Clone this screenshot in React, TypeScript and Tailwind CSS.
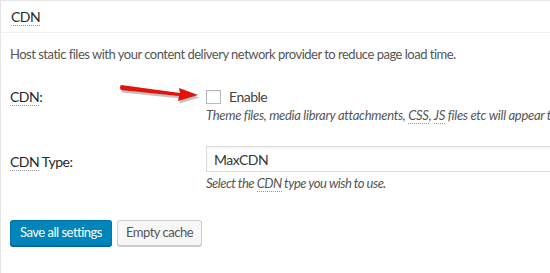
import React from "react";

const Abbr = ({ children }: { children: React.ReactNode }) => (
  <span className="border-b border-dotted border-[#999]">{children}</span>
);

const Arrow = () => (
  <svg width="84" height="22" viewBox="0 0 84 22" className="absolute left-[117px] top-[-5px]">
    <path d="M3 6 L62 13 L61 8 L80 15 L60 21 L61 16 L2 10 Z" fill="#777" opacity="0.45" transform="translate(1.5 1.5)" />
    <path d="M3 4 Q1 6.5 3 9 L61 15 L60 20 L80 14 L61 7 L62 12 Z" fill="#e3120b" />
  </svg>
);

export default function App() {
  return (
    <div
      className="w-[550px] h-[273px] overflow-hidden bg-white border-l border-t border-[#e5e5e5] text-[13px] tracking-[-0.5px] text-[#444]"
      style={{ fontFamily: 'Lato, "Open Sans", sans-serif' }}
    >
      <div className="h-[32px] border-b border-[#eee] pl-[10px] pt-[7px]">
        <span className="text-[14px] text-[#23282d] border-b border-dotted border-[#999] leading-[16px] inline-block">CDN</span>
      </div>
      <p className="pl-[9px] pt-[12px] text-[#555] leading-[18px]">
        Host static files with your content delivery network provider to reduce page load time.
      </p>
      <div className="relative flex mt-[23px]">
        <div className="w-[205px] shrink-0 pl-[9px] text-[14px] text-[#23282d]">
          <Abbr>CDN</Abbr>:
        </div>
        <div className="flex-1 min-w-0 overflow-hidden whitespace-nowrap">
          <label className="flex items-center gap-[8px] text-[14px] text-[#444]">
            <span className="w-[15px] h-[14px] border border-[#b4b9be] bg-white shadow-[inset_0_1px_2px_rgba(0,0,0,0.07)]" />
            Enable
          </label>
          <p className="italic text-[#555] mt-[-1px] leading-[18px] tracking-[-0.3px]">
            Theme files, media library attachments, <Abbr>CSS</Abbr>, <Abbr>JS</Abbr> files etc will appear to
          </p>
        </div>
        <Arrow />
      </div>
      <div className="flex mt-[22px]">
        <div className="w-[205px] shrink-0 pl-[9px] pt-[5px] text-[14px] text-[#23282d]">
          <Abbr>CDN</Abbr> Type:
        </div>
        <div className="flex-1 whitespace-nowrap">
          <div className="h-[26px] w-[400px] border border-[#ddd] shadow-[inset_0_1px_2px_rgba(0,0,0,0.07)] pl-[7px] flex items-center text-[14px] text-[#32373c]">
            MaxCDN
          </div>
          <p className="italic text-[#555] mt-[2px] leading-[18px]">
            Select the <Abbr>CDN</Abbr> type you wish to use.
          </p>
        </div>
      </div>
      <div className="flex gap-[5px] pl-[9px] mt-[28px]">
        <button className="h-[26px] px-[9px] rounded-[3px] bg-[#0085ba] border border-[#0073aa] border-b-[#006799] text-white text-[13px] shadow-[0_1px_0_#006799]">
          Save all settings
        </button>
        <button className="h-[26px] px-[8px] rounded-[3px] bg-[#f7f7f7] border border-[#ccc] text-[#555] text-[13px] shadow-[0_1px_0_#ccc]">
          Empty cache
        </button>
      </div>
    </div>
  );
}
